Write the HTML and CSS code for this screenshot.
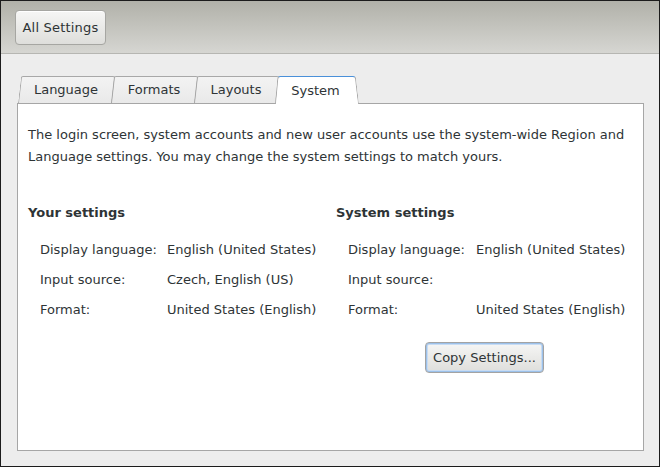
FILE: index.html
```html
<!DOCTYPE html>
<html>
<head>
<meta charset="utf-8">
<link rel="stylesheet" href="styles.css">
</head>
<body>
<div class="window">
  <header class="header">
    <button class="btn btn-all">All Settings</button>
  </header>
  <main class="content">
    <nav class="tabs">
      <div class="tab tab-language"><span>Language</span></div>
      <div class="tab tab-formats"><span>Formats</span></div>
      <div class="tab tab-layouts"><span>Layouts</span></div>
      <div class="tab tab-system active"><span>System</span></div>
    </nav>
    <section class="panel">
      <p class="intro">The login screen, system accounts and new user accounts use the system-wide Region and Language settings. You may change the system settings to match yours.</p>
      <div class="columns">
        <div class="col col-yours">
          <h3 class="col-title">Your settings</h3>
          <div class="rows">
            <div class="label">Display language:</div><div class="value">English (United States)</div>
            <div class="label">Input source:</div><div class="value">Czech, English (US)</div>
            <div class="label">Format:</div><div class="value">United States (English)</div>
          </div>
        </div>
        <div class="col col-system">
          <h3 class="col-title">System settings</h3>
          <div class="rows">
            <div class="label">Display language:</div><div class="value">English (United States)</div>
            <div class="label">Input source:</div><div class="value"></div>
            <div class="label">Format:</div><div class="value">United States (English)</div>
          </div>
          <div class="actions">
            <button class="btn btn-copy">Copy Settings...</button>
          </div>
        </div>
      </div>
    </section>
  </main>
</div>
</body>
</html>
```

FILE: styles.css
```css
* { box-sizing: border-box; }
html, body { margin: 0; padding: 0; }
body {
  font-family: "DejaVu Sans", sans-serif;
  font-size: 13px;
  color: #2e3436;
  background: #ededed;
}
.window {
  width: 660px;
  height: 467px;
  border: 1px solid #1c1c1c;
  display: flex;
  flex-direction: column;
  background: #ededed;
}
.header {
  height: 53px;
  border-bottom: 1px solid #b6b6b2;
  background: linear-gradient(#b1b1a9, #d6d6d2);
  padding: 9px 0 0 14px;
}
.btn {
  font-family: "DejaVu Sans", sans-serif;
  font-size: 13px;
  color: #2e3436;
  border: 1px solid #a6a6a2;
  border-radius: 4px;
  background: linear-gradient(#f6f6f5, #dededb);
  padding: 0;
  box-shadow: inset 0 1px #ffffff;
}
.btn-all {
  width: 91px;
  height: 35px;
  letter-spacing: 0.2px;
}
.content {
  flex: 1;
  display: flex;
  flex-direction: column;
  padding: 22px 15px 15px 16px;
}
.tabs {
  display: flex;
  height: 27px;
  padding-left: 1px;
  position: relative;
  z-index: 1;
}
.tab {
  position: relative;
  height: 27px;
  display: flex;
  align-items: center;
  justify-content: center;
  margin-right: -1px;
}
.tab span { position: relative; z-index: 2; padding-left: 2px; }
.tab::before {
  content: "";
  position: absolute;
  inset: 0;
  border: 1px solid #a8a8a8;
  border-bottom: none;
  border-radius: 2px 2px 0 0;
  background: linear-gradient(#f3f3f3, #e9e9e9);
  transform: skewX(-6.5deg);
  transform-origin: bottom;
}
.tab-language { width: 94px; }
.tab-formats { width: 84px; }
.tab-layouts { width: 82px; }
.tab-system { width: 83px; }
.tab.active { height: 28px; margin-bottom: -1px; z-index: 3; }
.tab.active span { padding-left: 0; padding-right: 2px; }
.tab.active::before,
.tab.active::after {
  content: "";
  position: absolute;
  top: 0;
  bottom: 0;
  background: #ffffff;
  border-top: 1px solid #4a90d9;
  transform-origin: bottom;
}
.tab.active::before {
  inset: 0 50% 0 0;
  border: none;
  border-top: 1px solid #4a90d9;
  border-left: 1px solid #a8a8a8;
  border-radius: 3px 0 0 0;
  transform: skewX(-5deg);
}
.tab.active::after {
  left: 50%;
  right: 0;
  border-right: 1px solid #a8a8a8;
  border-radius: 0 3px 0 0;
  transform: skewX(6.5deg);
}
.panel {
  flex: 1;
  background: #ffffff;
  border: 1px solid #a6a6a6;
  padding: 20px 10px 0 10px;
}
.intro {
  margin: 0;
  line-height: 22px;
}
.columns {
  display: flex;
  margin-top: 34px;
}
.col-yours { flex: none; width: 308px; }
.col-system { flex: 1; min-width: 0; }
.col-title {
  margin: 0;
  font-size: 13px;
  font-weight: bold;
  line-height: 22px;
}
.rows {
  margin-top: 10px;
  padding-left: 12px;
  display: grid;
  grid-template-columns: 127px auto;
  grid-auto-rows: 30px;
  align-items: center;
  white-space: nowrap;
}
.col-system .rows { grid-template-columns: 128px auto; }
.actions {
  margin-top: 18px;
  padding-left: 89px;
}
.btn-copy {
  width: 119px;
  height: 31px;
  border-color: #a3a3a3;
  box-shadow: inset 0 0 0 1px #9cc1ea, inset 0 0 0 2px #c8dcf3;
}
```
